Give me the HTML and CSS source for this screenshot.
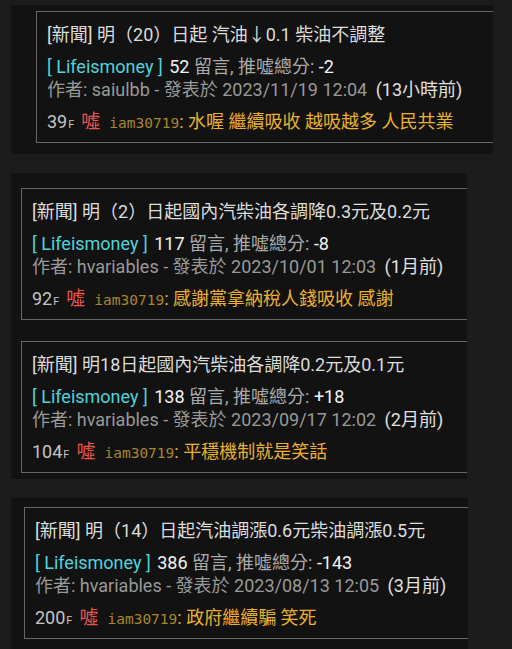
FILE: index.html
```html
<!DOCTYPE html>
<html lang="zh-Hant">
<head>
  <meta charset="UTF-8" />
  <meta name="viewport" content="width=device-width, initial-scale=1.0"/>
  <title>Lifeismoney 油價新聞</title>
  <link rel="stylesheet" href="styles.css">
</head>
<body>
  <div class="panel panel-a">
    <div class="card">
      <div class="title">[新聞] 明（20）日起 汽油↓0.1 柴油不調整</div>
      <div class="meta"><span class="board">[ Lifeismoney ]</span> <span class="num">52</span> 留言, 推噓總分: <span class="num">-2</span></div>
      <div class="author">作者: saiulbb - 發表於 2023/11/19 12:04 <span class="ago">(13小時前)</span></div>
      <div class="push"><span class="floor">39<small>F</small></span><span class="tag">噓</span><span class="uid">iam30719</span>: 水喔 繼續吸收 越吸越多 人民共業</div>
    </div>
  </div>

  <div class="panel panel-b">
    <div class="card">
      <div class="title">[新聞] 明（2）日起國內汽柴油各調降0.3元及0.2元</div>
      <div class="meta"><span class="board">[ Lifeismoney ]</span> <span class="num">117</span> 留言, 推噓總分: <span class="num">-8</span></div>
      <div class="author">作者: hvariables - 發表於 2023/10/01 12:03 <span class="ago">(1月前)</span></div>
      <div class="push"><span class="floor">92<small>F</small></span><span class="tag">噓</span><span class="uid">iam30719</span>: 感謝黨拿納稅人錢吸收 感謝</div>
    </div>
    <div class="card">
      <div class="title">[新聞] 明18日起國內汽柴油各調降0.2元及0.1元</div>
      <div class="meta"><span class="board">[ Lifeismoney ]</span> <span class="num">138</span> 留言, 推噓總分: <span class="num">+18</span></div>
      <div class="author">作者: hvariables - 發表於 2023/09/17 12:02 <span class="ago">(2月前)</span></div>
      <div class="push"><span class="floor">104<small>F</small></span><span class="tag">噓</span><span class="uid">iam30719</span>: 平穩機制就是笑話</div>
    </div>
  </div>

  <div class="panel panel-c">
    <div class="card">
      <div class="title">[新聞] 明（14）日起汽油調漲0.6元柴油調漲0.5元</div>
      <div class="meta"><span class="board">[ Lifeismoney ]</span> <span class="num">386</span> 留言, 推噓總分: <span class="num">-143</span></div>
      <div class="author">作者: hvariables - 發表於 2023/08/13 12:05 <span class="ago">(3月前)</span></div>
      <div class="push"><span class="floor">200<small>F</small></span><span class="tag">噓</span><span class="uid">iam30719</span>: 政府繼續騙 笑死</div>
    </div>
  </div>
</body>
</html>
```

FILE: styles.css
```css
html, body {
  margin: 0;
  background: #1c1c1c;
}
body {
  padding: 5px 0 0 11px;
  font-family: Roboto, "Noto Sans CJK TC", sans-serif;
  color: #aaa;
  overflow: hidden;
}
.panel {
  background: #121212;
  overflow: hidden;
  display: flex;
  flex-direction: column;
  gap: 21px;
  margin-bottom: 19px;
}
.panel-a {
  width: 482px;
  padding: 6px 0 11px 25px;
  box-sizing: border-box;
}
.panel-b {
  width: 456px;
  padding: 15px 0 6px 10px;
  box-sizing: border-box;
}
.panel-c {
  width: 457px;
  padding: 9px 0 10px 13px;
  box-sizing: border-box;
}
.card {
  flex-shrink: 0;
  width: 480px;
  height: 132px;
  box-sizing: border-box;
  border: 1px solid #666;
  padding: 8px 10px;
}
.title {
  font-size: 18px;
  line-height: 30px;
  color: #dcdcdc;
  margin-bottom: 5px;
  white-space: nowrap;
}
.meta, .author {
  font-size: 18px;
  line-height: 23px;
  white-space: nowrap;
}
.board {
  color: #4fd3dc;
  margin-right: 2px;
}
.num {
  color: #f2f2f2;
}
.author {
  color: #999;
}
.ago {
  color: #e0e0e0;
  margin-left: 4px;
}
.push {
  margin-top: 9px;
  font-size: 18px;
  line-height: 24px;
  color: #eab12e;
  white-space: nowrap;
}
.floor {
  color: #c4c4c4;
}
.floor small {
  font-size: 11px;
  margin-left: 1px;
}
.tag {
  color: #e8554e;
  font-size: 19px;
  margin: 0 9px 0 7px;
}
.uid {
  font-family: "DejaVu Sans Mono", monospace;
  font-size: 14.5px;
  color: #a8862c;
}
```
